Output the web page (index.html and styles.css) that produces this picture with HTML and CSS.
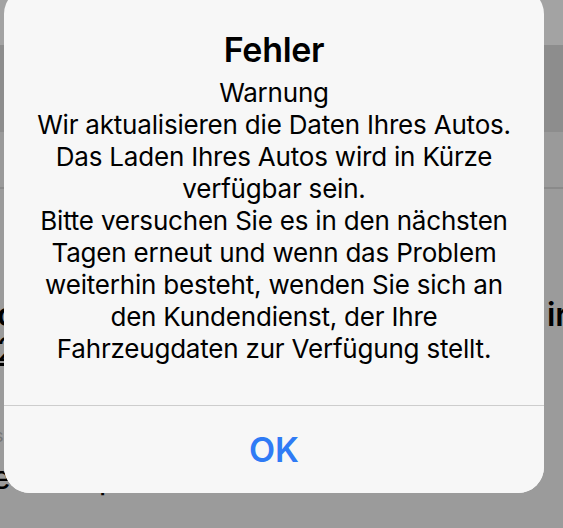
FILE: index.html
```html
<!DOCTYPE html>
<html lang="de">
<head>
  <meta charset="UTF-8" />
  <meta name="viewport" content="width=device-width, initial-scale=1.0" />
  <title>Fehler</title>
  <link rel="stylesheet" href="styles.css">
</head>
<body>
  <div class="screen">
    <div class="nav"></div>
    <div class="toolbar"></div>
    <div class="tabs"></div>
    <div class="content">
      <div class="row-big">
        <span>c</span>
        <span>ir</span>
      </div>
      <div class="row-link"><span>2</span></div>
      <div class="row-small">s</div>
      <div class="row-last">
        <span>e</span>
        <span>p</span>
      </div>
    </div>
  </div>

  <div class="alert">
    <div class="alert-body">
      <div class="alert-title">Fehler</div>
      <div class="alert-msg">
        Warnung<br>
        Wir aktualisieren die Daten Ihres Autos.<br>
        Das Laden Ihres Autos wird in Kürze<br>
        verfügbar sein.<br>
        Bitte versuchen Sie es in den nächsten<br>
        Tagen erneut und wenn das Problem<br>
        weiterhin besteht, wenden Sie sich an<br>
        den Kundendienst, der Ihre<br>
        Fahrzeugdaten zur Verfügung stellt.
      </div>
    </div>
    <button class="alert-btn">OK</button>
  </div>
</body>
</html>
```

FILE: styles.css
```css
body {
  margin: 0;
  width: 563px;
  height: 528px;
  overflow: hidden;
  background: #9b9b9b;
  font-family: "Inter", "Liberation Sans", sans-serif;
  position: relative;
}
.screen { width: 563px; }
.nav { height: 45px; background: #a3a3a3; }
.toolbar { height: 87px; background: #8d8d8d; }
.tabs {
  height: 55px;
  background: #9a9a9a;
  border-bottom: 2px solid #8a8a8a;
}
.content { color: #000; }
.row-big {
  display: flex;
  justify-content: space-between;
  margin: 108px -5px 0 -3px;
  font-size: 32px;
  font-weight: 600;
  line-height: 36px;
}
.row-link {
  margin-left: -3px;
  font-size: 32px;
  line-height: 34px;
  text-decoration: underline;
}
.row-small {
  margin: 58px 0 0 -6px;
  font-size: 18px;
  color: #777;
}
.row-last {
  display: flex;
  gap: 88px;
  margin: 14px 0 0 -8px;
  font-size: 32px;
  line-height: 36px;
}

.alert {
  position: absolute;
  left: 4px;
  top: -12px;
  width: 540px;
  height: 505px;
  background: #f7f7f7;
  border-radius: 26px;
  display: flex;
  flex-direction: column;
  overflow: hidden;
}
.alert-body {
  flex: 1;
  padding-top: 42px;
  text-align: center;
  color: #000;
}
.alert-title {
  font-size: 34px;
  font-weight: 600;
  line-height: 40px;
  letter-spacing: -0.3px;
}
.alert-msg {
  margin-top: 7px;
  font-size: 26px;
  line-height: 32px;
  letter-spacing: -0.2px;
  white-space: nowrap;
}
.alert-btn {
  height: 88px;
  border: none;
  border-top: 1px solid #cdcdcd;
  background: #f7f7f7;
  color: #2f7bf5;
  font-family: inherit;
  font-size: 34px;
  font-weight: 600;
  padding: 0;
}
```
